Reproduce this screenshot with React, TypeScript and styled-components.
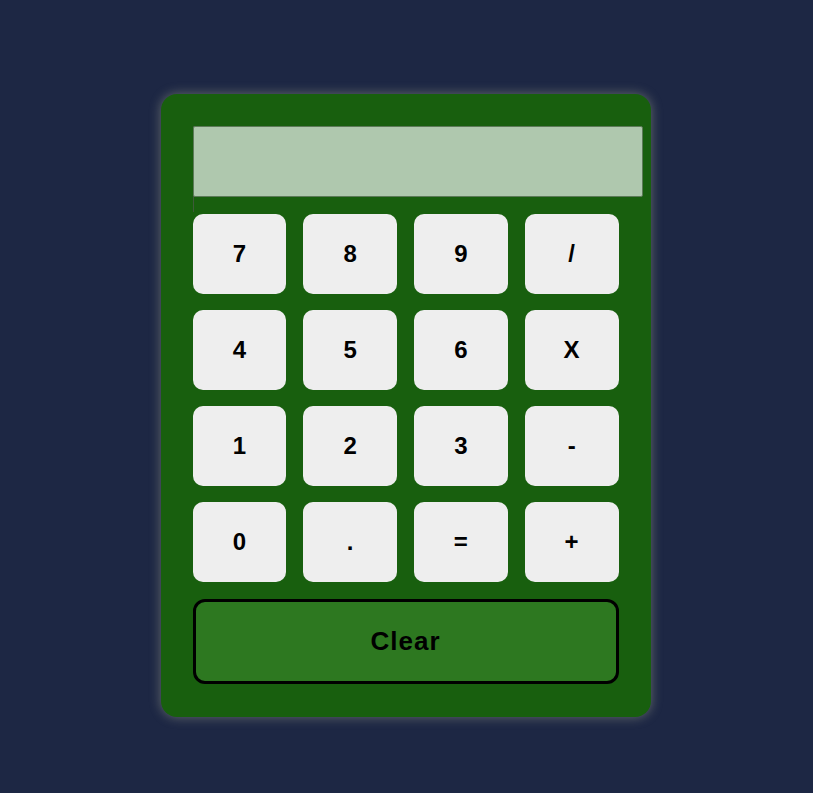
import React, { useState } from 'react';
import styled, { createGlobalStyle } from 'styled-components';

const GlobalStyle = createGlobalStyle`
  html, body {
    margin: 0;
    padding: 0;
    background: #1d2744;
    font-family: "Liberation Sans", Arial, sans-serif;
  }
`;

const Page = styled.div`
  min-height: 793px;
  display: flex;
  justify-content: center;
  align-items: flex-start;
  padding: 94px 2px 0 0;
  box-sizing: border-box;
`;

const Calculator = styled.div`
  width: 490px;
  box-sizing: border-box;
  padding: 32px 32px 33px;
  background: #185f0e;
  border-radius: 16px;
  box-shadow: 0 0 12px rgba(210, 210, 170, 0.4);
`;

const DisplayWrap = styled.div`
  height: 86px;
  border-left: 1px solid #3e5a3a;
  margin-bottom: 2px;
`;

const Display = styled.div`
  width: 450px;
  height: 71px;
  margin-left: -1px;
  box-sizing: border-box;
  background: #afc8ae;
  border: 1px solid #5c7a58;
  border-radius: 2px;
  font-size: 32px;
  font-weight: bold;
  text-align: right;
  padding: 16px 12px;
  color: #000;
`;

const Keypad = styled.div`
  display: grid;
  grid-template-columns: repeat(4, 1fr);
  grid-auto-rows: 80px;
  gap: 16px 17px;
`;

const Key = styled.button`
  border: none;
  border-radius: 10px;
  background: #eeeeee;
  font-family: "Liberation Sans", Arial, sans-serif;
  font-size: 24px;
  font-weight: bold;
  color: #000;
  cursor: pointer;
  padding: 0;
`;

const ClearButton = styled.button`
  display: block;
  width: 100%;
  height: 85px;
  margin-top: 17px;
  box-sizing: border-box;
  border: 3px solid #000;
  border-radius: 12px;
  background: #2d7820;
  font-family: "Liberation Sans", Arial, sans-serif;
  font-size: 26px;
  font-weight: bold;
  letter-spacing: 1px;
  color: #000;
  cursor: pointer;
`;

const keys = ['7', '8', '9', '/', '4', '5', '6', 'X', '1', '2', '3', '-', '0', '.', '=', '+'];

export default function App() {
  const [value, setValue] = useState('');

  const press = (k: string) => {
    if (k === '=') {
      try {
        const expr = value.replace(/X/g, '*');
        // eslint-disable-next-line no-new-func
        setValue(String(Function(`return (${expr})`)()));
      } catch {
        setValue('');
      }
      return;
    }
    setValue(v => v + k);
  };

  return (
    <>
      <GlobalStyle />
      <Page>
        <Calculator>
          <DisplayWrap>
            <Display>{value}</Display>
          </DisplayWrap>
          <Keypad>
            {keys.map(k => (
              <Key key={k} onClick={() => press(k)}>
                {k}
              </Key>
            ))}
          </Keypad>
          <ClearButton onClick={() => setValue('')}>Clear</ClearButton>
        </Calculator>
      </Page>
    </>
  );
}
